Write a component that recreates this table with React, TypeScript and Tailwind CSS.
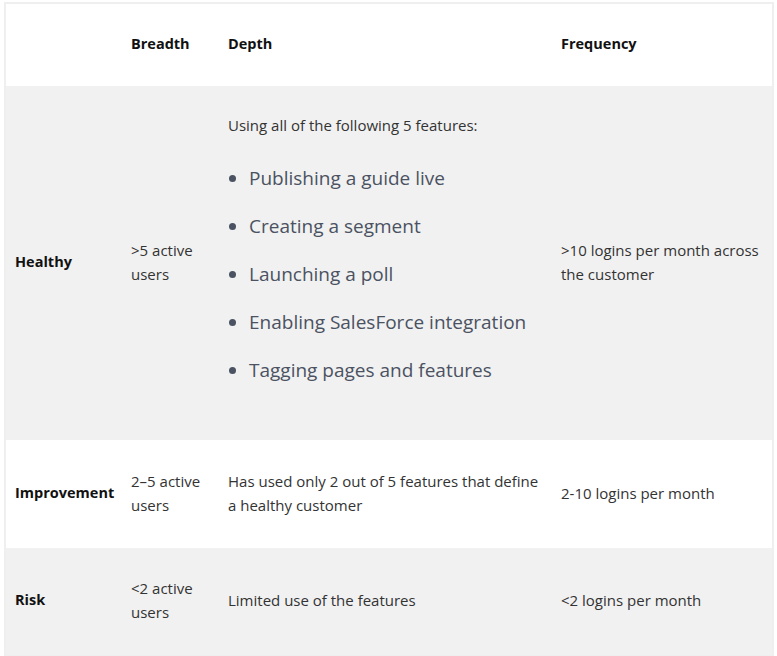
const rows = [
  {
    level: 'Healthy',
    breadth: '>5 active users',
    freq: '>10 logins per month across the customer',
    shaded: true,
    height: 'h-[354px]',
  },
  {
    level: 'Improvement',
    breadth: '2–5 active users',
    depth: 'Has used only 2 out of 5 features that define a healthy customer',
    freq: '2-10 logins per month',
    shaded: false,
    height: 'h-[108px]',
  },
  {
    level: 'Risk',
    breadth: '<2 active users',
    depth: 'Limited use of the features',
    freq: '<2 logins per month',
    shaded: true,
    height: 'h-[108px]',
  },
]

const features = [
  'Publishing a guide live',
  'Creating a segment',
  'Launching a poll',
  'Enabling SalesForce integration',
  'Tagging pages and features',
]

export default function App() {
  return (
    <div className="bg-white pl-[4px] pr-[3px] pt-[2px] font-['Open_Sans','Liberation_Sans',sans-serif] text-[15px] leading-[24px] text-[#333]">
      <table className="w-[770px] table-fixed border-collapse border-2 border-[#efefef]">
        <colgroup>
          <col className="w-[115px]" />
          <col className="w-[97px]" />
          <col className="w-[333px]" />
          <col />
        </colgroup>
        <thead>
          <tr className="h-[83px] bg-white text-left text-[14.5px] font-bold text-[#111]">
            <th className="pb-[3px] pl-[9px] pr-[11px]"></th>
            <th className="px-[11px] pb-[3px]">Breadth</th>
            <th className="px-[11px] pb-[3px]">Depth</th>
            <th className="px-[11px] pb-[3px]">Frequency</th>
          </tr>
        </thead>
        <tbody>
          {rows.map((r) => (
            <tr key={r.level} className={`${r.height} ${r.shaded ? 'bg-[#f1f1f1]' : 'bg-white'}`}>
              <td className="pb-[3px] pl-[9px] pr-[11px] align-middle text-[14.5px] font-bold text-[#111]">{r.level}</td>
              <td className="px-[11px] pb-[3px] align-middle">{r.breadth}</td>
              {r.depth ? (
                <td className="px-[11px] pb-[3px] align-middle">{r.depth}</td>
              ) : (
                <td className="px-[11px] pt-[27px] align-top">
                  <p>Using all of the following 5 features:</p>
                  <ul className="mt-[27px] list-disc pl-[21px] text-[19px] leading-[28px] text-[#4b5262]">
                    {features.map((f) => (
                      <li key={f} className="mt-[20px] first:mt-0">{f}</li>
                    ))}
                  </ul>
                </td>
              )}
              <td className="px-[11px] pb-[3px] align-middle">{r.freq}</td>
            </tr>
          ))}
        </tbody>
      </table>
    </div>
  )
}
